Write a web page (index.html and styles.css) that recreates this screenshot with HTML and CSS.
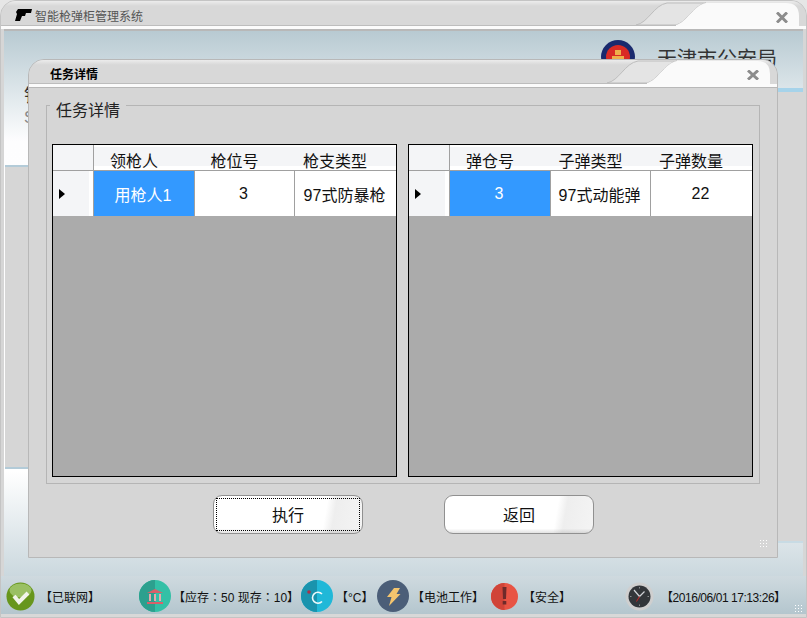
FILE: index.html
```html
<!DOCTYPE html>
<html lang="zh-CN">
<head>
    <meta charset="UTF-8">
    <title>智能枪弹柜管理系统</title>
    <link rel="stylesheet" href="styles.css">
</head>
<body>

    <div class="main-window">
        <div class="titlebar main-title">
            <svg class="gun-icon" width="17" height="12" viewBox="0 0 17 12"><path d="M3 0h14l-1 4h-5l-1 3H7l-2 5H0l2-7-1-2z" fill="#000"/></svg>
            <span class="app-name">智能枪弹柜管理系统</span>
            <svg class="tab-shape" width="170" height="26" viewBox="0 -3 170 26"><path d="M0 22C12 20 18 2 31 0h39C58 2 50 20 40 22z" fill="#e4e4e4" stroke="#bdbdbd"/><path d="M40 22C50 20 58 2 70 0h80q13 0 13 13v10H40z" fill="#fafafa"/></svg>
            <svg class="close-x" width="12" height="11" viewBox="0 0 12 11"><path d="M1 .5l10 10M11 .5l-10 10" stroke="#8c8c8c" stroke-width="3"/></svg>
        </div>
        <div class="main-body">
            <div class="org-head">
                <svg class="badge" width="36" height="36" viewBox="0 0 36 36"><circle cx="18" cy="18" r="17" fill="#1a2a6e"/><path d="M3 24q15 14 30 0l2 6H1z" fill="#f0d9a8"/><circle cx="18" cy="18" r="12" fill="#d92b25"/><path d="M12 17h12v4H12zM15 11h6v5h-6z" fill="#eeb04a"/></svg>
                <span class="org-name">天津市公安局</span>
            </div>
            <div class="side-panel left-panel"></div>
            <div class="side-panel right-panel"></div>
            <div class="hidden-text dark">铁</div>
            <div class="hidden-text soft">S</div>
        </div>
        <div class="status-bar">
            <div class="status-item net">
                <svg width="29" height="29" viewBox="0 0 29 29"><circle cx="14.500" cy="14.500" r="14" fill="#67961c"/><ellipse cx="14.500" cy="8.500" rx="11" ry="7" fill="#9ac063"/><path d="M8 14l5 6 9-9" fill="none" stroke="#f1f4ea" stroke-width="4"/></svg>
                <span>【已联网】</span>
            </div>
            <div class="status-item stock">
                <svg width="32" height="32" viewBox="0 0 32 32"><circle cx="16" cy="16" r="16" fill="#33c0a6"/><path d="M16 0a16 16 0 0 0 0 32z" fill="#2ca08e"/><path d="M16 9l8 4H8zM8 22h16v2H8z" fill="#d9606a"/><path d="M10 14h2v7h-2zM15 14h2v7h-2zM20 14h2v7h-2z" fill="#e8a7ab"/></svg>
                <span>【应存<span class="colon" lang="zh-TW">：</span>50 现存<span class="colon" lang="zh-TW">：</span>10】</span>
            </div>
            <div class="status-item temp">
                <svg width="32" height="32" viewBox="0 0 32 32"><circle cx="16" cy="16" r="16" fill="#20b8d8"/><path d="M16 0a16 16 0 0 0 0 32z" fill="#1a93ad"/><circle cx="8" cy="12" r="1.800" fill="#a8324a"/><path d="M21 14a5.500 5.500 0 1 0 0 7.500" fill="none" stroke="#eef9fb" stroke-width="1.600"/></svg>
                <span>【°C】</span>
            </div>
            <div class="status-item power">
                <svg width="32" height="32" viewBox="0 0 32 32"><circle cx="16" cy="16" r="16" fill="#4b5e78"/><path d="M17 8h6l-3.500 6h4L12 26l2.500-9H10z" fill="#f4c56e"/></svg>
                <span>【电池工作】</span>
            </div>
            <div class="status-item safe">
                <svg width="27" height="27" viewBox="0 0 27 27"><circle cx="13.500" cy="13.500" r="13.500" fill="#e85444"/><path d="M13.500 0a13.500 13.500 0 0 0 0 27z" fill="#d04438"/><path d="M11.500 4h4l-.5 12h-3zM11.700 18h3.600v3.500h-3.600z" fill="#6e2a2a"/></svg>
                <span>【安全】</span>
            </div>
            <div class="status-item clock">
                <svg width="29" height="29" viewBox="0 0 29 29"><circle cx="14.500" cy="14.500" r="14" fill="#cfcfcf"/><circle cx="14.500" cy="14.500" r="11" fill="#33363a"/><path d="M9 8l5.500 6.500 5-5" fill="none" stroke="#cfd2d6" stroke-width="1.200"/><path d="M14.500 14.500l-3 5" stroke="#c22" stroke-width="1"/><path d="M14 5h1v1.500h-1zM14 22.500h1V24h-1zM5 14h1.500v1H5zM22.500 14H24v1h-1.500z" fill="#8a8d90"/></svg>
                <span class="date-text">【2016/06/01 17:13:26】</span>
            </div>
            <span class="grip main-grip"></span>
        </div>

        <div class="dialog">
            <div class="titlebar dialog-title">
                <span class="dialog-name">任务详情</span>
                <svg class="tab-shape" width="170" height="26" viewBox="0 -3 170 26"><path d="M0 22C12 20 18 2 31 0h39C58 2 50 20 40 22z" fill="#e4e4e4" stroke="#bdbdbd"/><path d="M40 22C50 20 58 2 70 0h80q13 0 13 13v10H40z" fill="#fafafa"/></svg>
                <svg class="close-x" width="12" height="10" viewBox="0 0 12 10"><path d="M1 .5l10 9M11 .5l-10 9" stroke="#8c8c8c" stroke-width="3"/></svg>
            </div>
            <div class="dialog-body">
                <fieldset class="group">
                    <legend>任务详情</legend>
                    <div class="grids">
                        <div class="grid">
                            <div class="row head">
                                <div class="cell marker"></div>
                                <div class="cell c1">领枪人</div>
                                <div class="cell c2">枪位号</div>
                                <div class="cell c3">枪支类型</div>
                            </div>
                            <div class="row data">
                                <div class="cell marker"><i class="arrow"></i></div>
                                <div class="cell c1 selected">用枪人1</div>
                                <div class="cell c2">3</div>
                                <div class="cell c3">97式防暴枪</div>
                            </div>
                        </div>
                        <div class="grid">
                            <div class="row head">
                                <div class="cell marker"></div>
                                <div class="cell c1">弹仓号</div>
                                <div class="cell c2">子弹类型</div>
                                <div class="cell c3">子弹数量</div>
                            </div>
                            <div class="row data">
                                <div class="cell marker"><i class="arrow"></i></div>
                                <div class="cell c1 selected">3</div>
                                <div class="cell c2">97式动能弹</div>
                                <div class="cell c3">22</div>
                            </div>
                        </div>
                    </div>
                </fieldset>
                <div class="actions">
                    <button class="btn focused"><span>执行</span></button>
                    <button class="btn"><span>返回</span></button>
                </div>
                <span class="grip dialog-grip"></span>
            </div>
        </div>
    </div>

</body>
</html>
```

FILE: styles.css
```css
* {
    box-sizing: border-box;
}

body {
    margin: 0;
    width: 807px;
    height: 618px;
    overflow: hidden;
    background-color: #e6e6e6;
    font-family: "Liberation Sans", "Noto Sans CJK SC", sans-serif;
    color: #000;
}

.main-window {
    position: relative;
    width: 807px;
    height: 618px;
    display: flex;
    flex-direction: column;
    background-color: #d6d6d6;
    border: 1px solid #c4c4c4;
    border-radius: 16px 16px 0 0;
    overflow: hidden;
}

.titlebar {
    position: relative;
    display: flex;
    align-items: center;
    flex: none;
    background: linear-gradient(#ececec, #d8d8d8 20%);
}

.main-title {
    height: 28px;
    padding-left: 14px;
    padding-top: 3px;
    border-bottom: 3px solid #fbfbfb;
}

.gun-icon {
    margin-right: 3px;
}

.app-name {
    font-size: 12px;
    color: #555;
}

.tab-shape {
    position: absolute;
    right: 0;
    bottom: 0;
}

.main-title::after,
.dialog-title::after {
    content: "";
    position: absolute;
    left: 0;
    right: 130px;
    bottom: 0;
    height: 1px;
    background-color: #bdbdbd;
}

.main-title .close-x {
    position: absolute;
    right: 18px;
    top: 11px;
}

.dialog-title .close-x {
    position: absolute;
    right: 18px;
    top: 10px;
}

.main-body {
    position: relative;
    flex: 1;
    margin: 0 3px;
    border-top: 2px solid #b8b8b8;
    background: linear-gradient(#b8cad2, #dde6ea 60px, #fdfdfe 110px, #fff 440px, #cbd8de);
}

.org-head {
    position: absolute;
    left: 596px;
    top: 8px;
    display: flex;
    gap: 21px;
}

.org-name {
    font-size: 20px;
    line-height: 24px;
    margin-top: 8px;
    color: #333;
}

.side-panel {
    position: absolute;
    background-color: #d6d6d6;
}

.left-panel {
    left: 1px;
    top: 134px;
    width: 24px;
    height: 304px;
    border-top: 2px solid #b3cbd8;
    border-bottom: 2px solid #b3cbd8;
}

.right-panel {
    left: 774px;
    right: 0;
    top: 57px;
    height: 455px;
    border-top: 4px solid #a6d3ea;
    border-bottom: 2px solid #c8dbe4;
}

.hidden-text {
    position: absolute;
    left: 20px;
}

.hidden-text.dark {
    top: 50px;
    font-size: 18px;
    color: #333;
}

.hidden-text.soft {
    top: 78px;
    font-size: 16px;
    color: #888;
}

.status-bar {
    position: relative;
    flex: none;
    height: 41px;
    border-bottom: 3px solid #d8d8d8;
    background: linear-gradient(#cfdadf, #b4c6ce);
    font-size: 12px;
}

.status-item {
    position: absolute;
    top: 2px;
    height: 36px;
    display: flex;
    align-items: center;
    color: #111;
}

.status-item.net { left: 5px; gap: 5px; }
.status-item.stock { left: 138px; gap: 2px; }
.status-item.temp { left: 300px; gap: 3px; }
.status-item.power { left: 376px; gap: 3px; }
.status-item.safe { left: 490px; gap: 5px; }
.status-item.clock { left: 624px; gap: 7px; }

.colon {
    font-family: "Noto Sans CJK TC", sans-serif;
}

.date-text {
    letter-spacing: -0.45px;
}

.grip {
    position: absolute;
    width: 10px;
    height: 10px;
    background-image: radial-gradient(#fff 1px, transparent 1px);
    background-size: 3px 3px;
}

.main-grip {
    right: 2px;
    bottom: 0;
}

.dialog {
    position: absolute;
    left: 27px;
    top: 58px;
    width: 750px;
    height: 499px;
    display: flex;
    flex-direction: column;
    border: 1px solid #b8b8b8;
    border-radius: 16px 16px 0 0;
    overflow: hidden;
    background-color: #d6d6d6;
}

.dialog-title {
    height: 27px;
    padding-left: 21px;
    padding-top: 3px;
    border-bottom: 3px solid #fbfbfb;
}

.dialog-name {
    font-size: 12px;
    font-weight: bold;
}

.dialog-body {
    position: relative;
    flex: 1;
    padding: 17px 17px 0;
    border-top: 1px solid #b8b8b8;
}

.group {
    margin: 0;
    height: 379px;
    padding: 38px 5px 0;
    border: 1px solid #b5b5b5;
    position: relative;
}

.group legend {
    position: absolute;
    top: -6px;
    left: 3px;
    padding: 0 6px;
    font-size: 16px;
    line-height: 22px;
    background-color: #d6d6d6;
    color: #222;
}

.grids {
    display: flex;
    gap: 11px;
}

.grid {
    flex: none;
    width: 345px;
    height: 333px;
    border: 1px solid #000;
    background-color: #ababab;
}

.row {
    display: flex;
}

.head {
    height: 26px;
    background: linear-gradient(#fff 2px, #f4f5f7 2px, #f4f5f7 21px, #fff 21px);
    border-bottom: 1px solid #a0a0a0;
}

.data {
    height: 45px;
    background-color: #fff;
}

.cell {
    display: flex;
    align-items: center;
    justify-content: center;
    font-size: 16px;
    border-right: 1px solid #a0a0a0;
    color: #111;
}

.head .cell {
    border-right: none;
    padding: 4px 21px 0 0;
}

.data .c1,
.data .c2,
.data .c3 {
    padding-right: 2px;
}

.marker {
    width: 41px;
    background: linear-gradient(90deg, #f4f5f7 36px, #fff 36px);
    justify-content: flex-start;
    padding-left: 6px;
}

.head .marker {
    background: #f4f5f7;
    border-right: 1px solid #a0a0a0;
    padding: 0;
}

.c1 {
    width: 101px;
}

.c2 {
    width: 100px;
}

.c3 {
    width: 101px;
    border-right: none;
}

.selected {
    background-color: #3399ff;
    color: #fff;
}

.arrow {
    display: block;
    width: 0;
    height: 0;
    border-top: 5px solid transparent;
    border-bottom: 5px solid transparent;
    border-left: 6px solid #000;
}

.actions {
    display: flex;
    gap: 81px;
    padding: 11px 0 0 167px;
}

.btn {
    width: 150px;
    height: 39px;
    padding: 0;
    border: 1px solid #909090;
    border-radius: 9px;
    background: linear-gradient(#fff 88%, #e2e2e2), linear-gradient(100deg, #fff 74%, #eee 80%, #f4f4f4);
    background-blend-mode: multiply;
    font-family: inherit;
    font-size: 16px;
    color: #111;
}

.btn span {
    display: flex;
    align-items: center;
    justify-content: center;
    height: 100%;
    padding-bottom: 2px;
}

.btn.focused span {
    margin: 2px;
    height: 33px;
    border: 1px dotted #000;
}

.dialog-grip {
    right: 8px;
    bottom: 8px;
}
```
